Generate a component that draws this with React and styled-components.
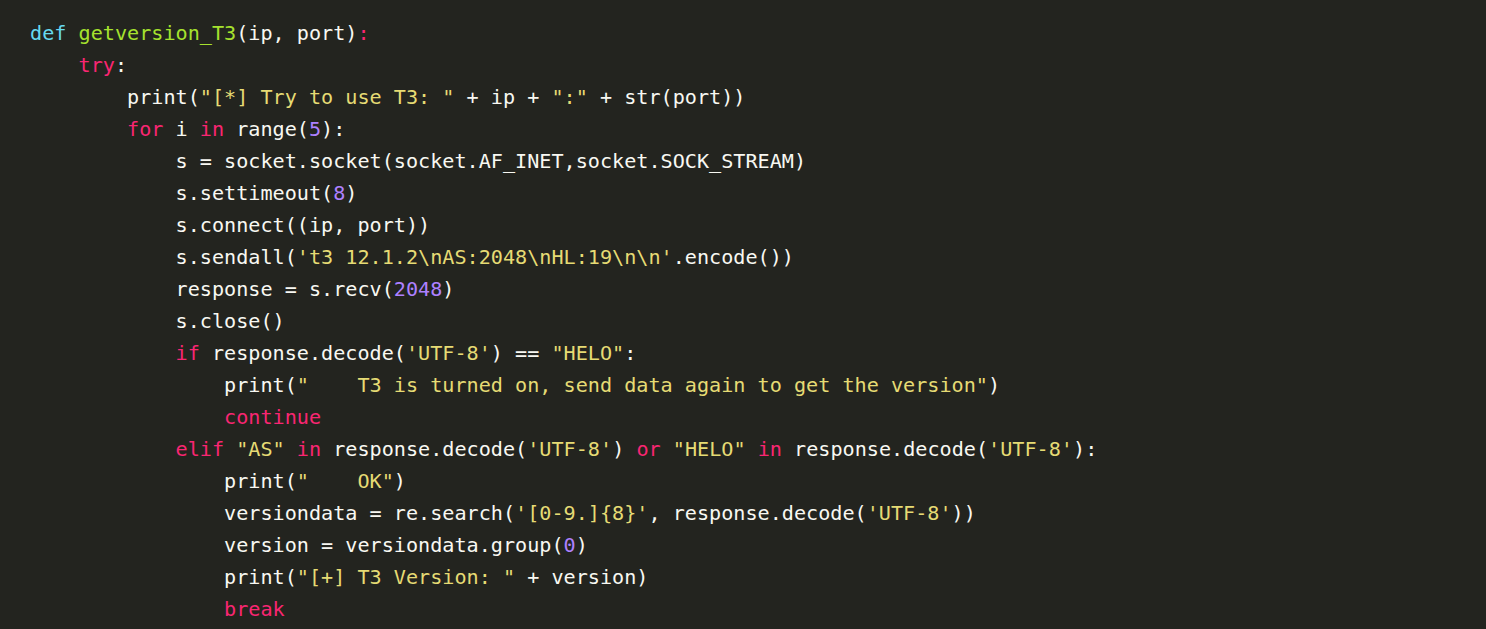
import React from "react";
import styled, { createGlobalStyle } from "styled-components";

const Global = createGlobalStyle`
  html, body {
    margin: 0;
    padding: 0;
    background: #23241f;
  }
`;

const Page = styled.div`
  min-height: 100vh;
  background: #23241f;
  overflow: hidden;
`;

const CodeBlock = styled.pre`
  margin: 0;
  padding: 17px 30px;
  font-family: "DejaVu Sans Mono", "Liberation Mono", monospace;
  font-size: 20.15px;
  line-height: 32px;
  color: #f8f8f2;
  white-space: pre;
`;

const Line = styled.div`
  height: 32px;
`;

const colors = {
  kw: "#f92672",
  def: "#66d9ef",
  fn: "#a6e22e",
  str: "#e6db74",
  num: "#ae81ff",
  txt: "#f8f8f2",
};

const Tok = styled.span`
  color: ${(p) => colors[p.$k] || colors.txt};
`;

const lines = [
  [["def", "def"], ["txt", " "], ["fn", "getversion_T3"], ["txt", "(ip, port)"], ["kw", ":"]],
  [["txt", "    "], ["kw", "try"], ["txt", ":"]],
  [["txt", "        print("], ["str", "\"[*] Try to use T3: \""], ["txt", " + ip + "], ["str", "\":\""], ["txt", " + str(port))"]],
  [["txt", "        "], ["kw", "for"], ["txt", " i "], ["kw", "in"], ["txt", " range("], ["num", "5"], ["txt", "):"]],
  [["txt", "            s = socket.socket(socket.AF_INET,socket.SOCK_STREAM)"]],
  [["txt", "            s.settimeout("], ["num", "8"], ["txt", ")"]],
  [["txt", "            s.connect((ip, port))"]],
  [["txt", "            s.sendall("], ["str", "'t3 12.1.2\\nAS:2048\\nHL:19\\n\\n'"], ["txt", ".encode())"]],
  [["txt", "            response = s.recv("], ["num", "2048"], ["txt", ")"]],
  [["txt", "            s.close()"]],
  [["txt", "            "], ["kw", "if"], ["txt", " response.decode("], ["str", "'UTF-8'"], ["txt", ") == "], ["str", "\"HELO\""], ["txt", ":"]],
  [["txt", "                print("], ["str", "\"    T3 is turned on, send data again to get the version\""], ["txt", ")"]],
  [["txt", "                "], ["kw", "continue"]],
  [["txt", "            "], ["kw", "elif"], ["txt", " "], ["str", "\"AS\""], ["txt", " "], ["kw", "in"], ["txt", " response.decode("], ["str", "'UTF-8'"], ["txt", ") "], ["kw", "or"], ["txt", " "], ["str", "\"HELO\""], ["txt", " "], ["kw", "in"], ["txt", " response.decode("], ["str", "'UTF-8'"], ["txt", "):"]],
  [["txt", "                print("], ["str", "\"    OK\""], ["txt", ")"]],
  [["txt", "                versiondata = re.search("], ["str", "'[0-9.]{8}'"], ["txt", ", response.decode("], ["str", "'UTF-8'"], ["txt", "))"]],
  [["txt", "                version = versiondata.group("], ["num", "0"], ["txt", ")"]],
  [["txt", "                print("], ["str", "\"[+] T3 Version: \""], ["txt", " + version)"]],
  [["txt", "                "], ["kw", "break"]],
];

export default function App() {
  return (
    <Page>
      <Global />
      <CodeBlock>
        {lines.map((line, i) => (
          <Line key={i}>
            {line.map(([k, t], j) => (
              <Tok key={j} $k={k}>
                {t}
              </Tok>
            ))}
          </Line>
        ))}
      </CodeBlock>
    </Page>
  );
}
